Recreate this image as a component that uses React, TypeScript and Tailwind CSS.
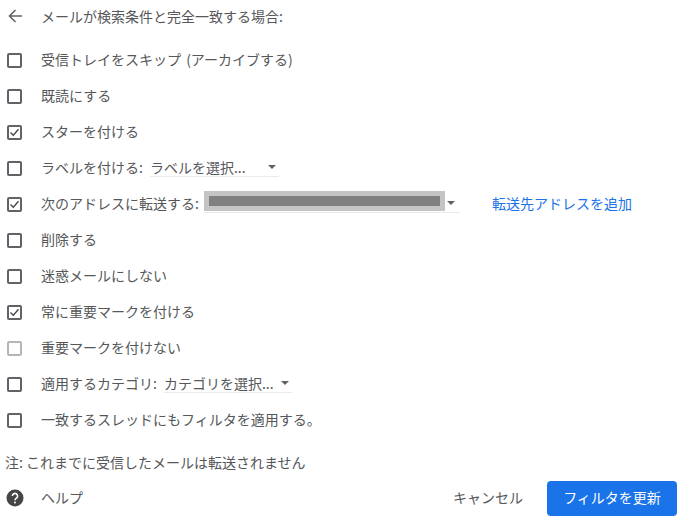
import { ReactNode } from 'react';

const font = "font-['Noto_Sans_CJK_JP','Noto_Sans',sans-serif]";

function Check({ checked, light }: { checked?: boolean; light?: boolean }) {
  return (
    <span
      className={`flex h-[15px] w-[15px] shrink-0 items-center justify-center rounded-[2px] border-2 ${
        light ? 'border-[#b5b5b5]' : 'border-[#5f6368]'
      }`}
    >
      {checked && (
        <svg width="11" height="11" viewBox="0 0 11 11" fill="none" stroke="#444" strokeWidth="1.3">
          <path d="M1.5 5.5l2.8 2.8 5.2-6" />
        </svg>
      )}
    </span>
  );
}

function Caret() {
  return (
    <svg width="8" height="4" viewBox="0 0 8 4" className="shrink-0">
      <path d="M0 0h8L4 4z" fill="#5f6368" />
    </svg>
  );
}

function Row({ checked, light, children }: { checked?: boolean; light?: boolean; children: ReactNode }) {
  return (
    <div className="flex h-9 items-center">
      <Check checked={checked} light={light} />
      <div className="-mt-[2px] ml-[19px] flex items-center">{children}</div>
    </div>
  );
}

function Select({ label, width }: { label: string; width: string }) {
  return (
    <div className={`ml-[7px] flex h-[20px] items-center border-b border-[#e8eaed] ${width}`}>
      <span>{label}</span>
      <span className="ml-auto flex pr-[3px]">
        <Caret />
      </span>
    </div>
  );
}

export default function App() {
  return (
    <div className={`${font} h-[522px] w-[685px] overflow-hidden bg-white pl-[7px] pr-2 text-[14px] leading-5 text-[#555759]`}>
      <div className="flex h-[32px] items-center">
        <svg width="16" height="16" viewBox="0 0 16 16" fill="none" stroke="#5f6368" strokeWidth="1.6" className="shrink-0">
          <path d="M15 8H2.5M8.5 2L2.5 8l6 6" />
        </svg>
        <span className="ml-[18px]">メールが検索条件と完全一致する場合:</span>
      </div>

      <div className="mt-[10px]">
        <Row>
          <span className="[word-spacing:2px]">受信トレイをスキップ (アーカイブする)</span>
        </Row>
        <Row>既読にする</Row>
        <Row checked>スターを付ける</Row>
        <Row>
          <span>ラベルを付ける:</span>
          <Select label="ラベルを選択..." width="w-[129px]" />
        </Row>
        <Row checked>
          <span>次のアドレスに転送する:</span>
          <div className="ml-[5px] flex h-[20px] w-[256px] items-center border-b border-[#e8eaed]">
            <div className="-mt-[3px] flex h-[20px] w-[241px] items-center bg-[#c4c4c4] px-[5px]">
              <div className="h-[10px] w-[231px] bg-[#808080]" />
            </div>
            <span className="ml-[2px] flex">
              <Caret />
            </span>
          </div>
          <a className="ml-[32px] text-[#1a73e8]">転送先アドレスを追加</a>
        </Row>
        <Row>削除する</Row>
        <Row>迷惑メールにしない</Row>
        <Row checked>常に重要マークを付ける</Row>
        <Row light>重要マークを付けない</Row>
        <Row>
          <span>適用するカテゴリ:</span>
          <Select label="カテゴリを選択..." width="w-[128px]" />
        </Row>
        <Row>一致するスレッドにもフィルタを適用する。</Row>
      </div>

      <div className="-ml-[2px] mt-[12px] leading-6">注: これまでに受信したメールは転送されません</div>

      <div className="mt-[6px] flex h-9 items-center">
        <svg width="18" height="18" viewBox="0 0 18 18" className="-ml-[1px] shrink-0">
          <circle cx="9" cy="9" r="8.5" fill="#444746" />
          <path d="M6.4 7a2.6 2.6 0 1 1 4 2.2c-.9.6-1.4 1-1.4 2" fill="none" stroke="#fff" strokeWidth="1.6" />
          <circle cx="9" cy="13.6" r="1" fill="#fff" />
        </svg>
        <span className="-mt-[2px] ml-[17px]">ヘルプ</span>
        <span className="ml-auto -mt-[2px]">キャンセル</span>
        <button className="ml-[24px] h-[35px] w-[130px] rounded-[4px] bg-[#1a73e8] pb-[2px] text-center text-white">
          フィルタを更新
        </button>
      </div>
    </div>
  );
}
